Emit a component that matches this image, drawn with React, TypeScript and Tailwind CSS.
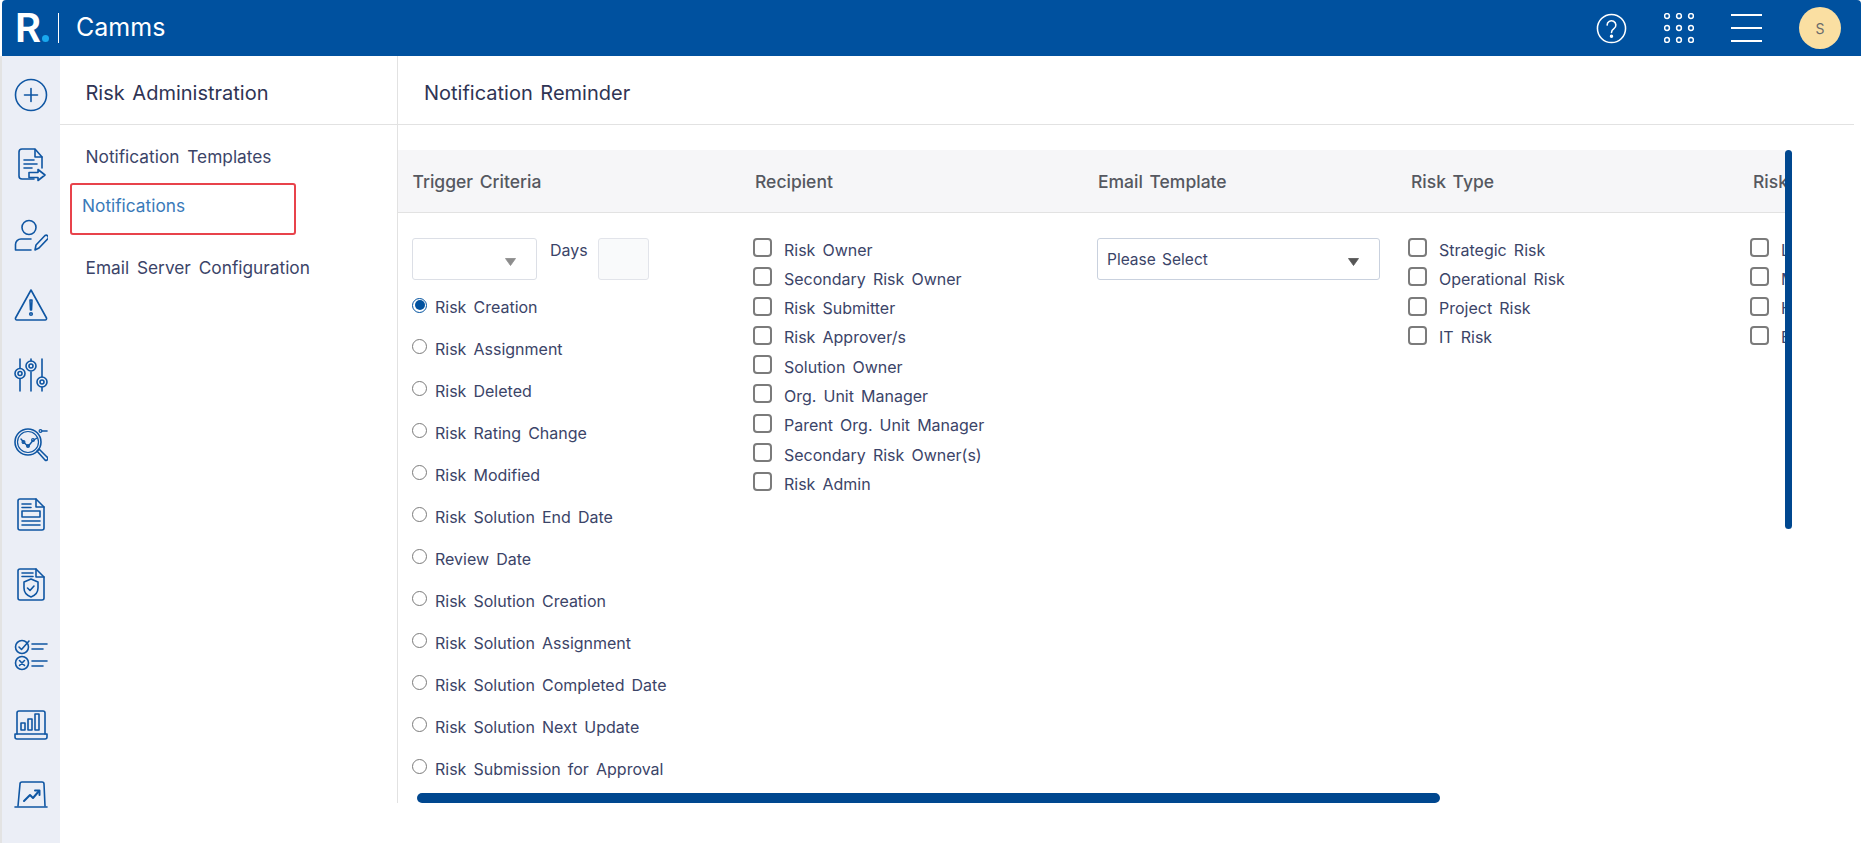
import React from "react";

const triggers = [
  "Risk Creation",
  "Risk Assignment",
  "Risk Deleted",
  "Risk Rating Change",
  "Risk Modified",
  "Risk Solution End Date",
  "Review Date",
  "Risk Solution Creation",
  "Risk Solution Assignment",
  "Risk Solution Completed Date",
  "Risk Solution Next Update",
  "Risk Submission for Approval",
];

const recipients = [
  "Risk Owner",
  "Secondary Risk Owner",
  "Risk Submitter",
  "Risk Approver/s",
  "Solution Owner",
  "Org. Unit Manager",
  "Parent Org. Unit Manager",
  "Secondary Risk Owner(s)",
  "Risk Admin",
];

const riskTypes = ["Strategic Risk", "Operational Risk", "Project Risk", "IT Risk"];
const riskLevels = ["Low", "Medium", "High", "Extreme"];

function SideIcon({ children }: { children: React.ReactNode }) {
  return (
    <svg
      viewBox="0 0 34 34"
      className="h-[34px] w-[34px] shrink-0"
      fill="none"
      stroke="#0f56a3"
      strokeWidth="1.6"
      strokeLinecap="round"
      strokeLinejoin="round"
    >
      {children}
    </svg>
  );
}

function Sidebar() {
  return (
    <div className="flex w-[58px] shrink-0 flex-col items-center gap-[36px] overflow-hidden bg-[#ebeef6] pt-[22px]">
      <SideIcon>
        <circle cx="17" cy="17" r="15.500" />
        <path d="M17 10.500v13M10.500 17h13" />
      </SideIcon>
      <SideIcon>
        <path d="M20 31H8a3 3 0 0 1-3-3V4a3 3 0 0 1 3-3h13l7 8v11" />
        <path d="M21 1.500V9h7" />
        <path d="M10 12h10M10 16h13M10 20h8" />
        <path d="M15 24.500h9v-3l7 5.500-7 5.500v-3h-9z" />
      </SideIcon>
      <SideIcon>
        <circle cx="15" cy="9.500" r="7" />
        <path d="M17 21H7a5.500 5.500 0 0 0-5.500 5.500V32H17" />
        <path d="M21 32l1-5 9-9.500a2.200 2.200 0 0 1 3 3l-9 9.500z" />
      </SideIcon>
      <SideIcon>
        <path d="M17 2L1.500 30a1.500 1.500 0 0 0 1.300 2h28.400a1.500 1.500 0 0 0 1.300-2z" />
        <path d="M16 12h2l-.5 10h-1z" />
        <circle cx="17" cy="26" r="1.300" />
      </SideIcon>
      <SideIcon>
        <path d="M6 1v9M6 21v12M17 1v2M17 14v19M28 1v18M28 29v4" />
        <circle cx="6" cy="15.500" r="5" />
        <circle cx="6" cy="15.500" r="2" />
        <circle cx="17" cy="8" r="5" />
        <circle cx="17" cy="8" r="2" />
        <circle cx="28" cy="24" r="5" />
        <circle cx="28" cy="24" r="2" />
      </SideIcon>
      <SideIcon>
        <circle cx="14" cy="14" r="13" />
        <circle cx="14" cy="14" r="10.500" strokeWidth="1.200" />
        <path d="M7 11l3 3.500 4 4 5-6 4-2.500" strokeWidth="1.400" />
        <circle cx="9.500" cy="14" r="1.400" strokeWidth="1.200" />
        <circle cx="14" cy="18" r="1.400" strokeWidth="1.200" />
        <circle cx="19" cy="12" r="1.400" strokeWidth="1.200" />
        <path d="M23 23l2-2 8 8a1.400 1.400 0 0 1-2 3z" />
        <path d="M28 3h5" />
        <circle cx="26.500" cy="3" r="1.400" strokeWidth="1.200" />
      </SideIcon>
      <SideIcon>
        <path d="M6 1h16l8 8v21a2 2 0 0 1-2 2H6a2 2 0 0 1-2-2V3a2 2 0 0 1 2-2z" />
        <path d="M22 1v8h8" />
        <path d="M8 6h9M8 9.500h9" />
        <rect x="8" y="13" width="18" height="6" />
        <path d="M8 23h18M8 27h18" />
      </SideIcon>
      <SideIcon>
        <path d="M6 1h16l8 8v21a2 2 0 0 1-2 2H6a2 2 0 0 1-2-2V3a2 2 0 0 1 2-2z" />
        <path d="M22 1v8h8" />
        <path d="M8 5h11M8 8.500h11" />
        <path d="M17 11l7 3v6c0 4.500-3 7.500-7 9-4-1.500-7-4.500-7-9v-6z" />
        <path d="M13.500 20l2.500 2.500 4-4.500" />
      </SideIcon>
      <SideIcon>
        <circle cx="8" cy="9" r="6.500" />
        <path d="M5 9l2.500 2.500L15 3" />
        <circle cx="8" cy="25" r="6.500" />
        <path d="M5.500 22.500l5 5M10.500 22.500l-5 5" />
        <path d="M18 6h15M18 11h11M18 23h15M18 28h11" />
      </SideIcon>
      <SideIcon>
        <path d="M3 26V5a2 2 0 0 1 2-2h24a2 2 0 0 1 2 2v21" />
        <path d="M1 26h32v3a2 2 0 0 1-2 2H3a2 2 0 0 1-2-2z" />
        <rect x="7" y="15" width="4" height="7" />
        <rect x="14" y="11" width="4" height="11" />
        <rect x="21" y="6" width="4" height="16" />
      </SideIcon>
      <SideIcon>
        <path d="M4 28L6 6a2 2 0 0 1 2-2h20a2 2 0 0 1 2 2l1 22" />
        <path d="M1 29h32" />
        <path d="M10 23l6-6 3 3 6-7" strokeWidth="2" />
        <path d="M21 12.500h4.500V17" strokeWidth="2" />
      </SideIcon>
    </div>
  );
}

function Checks({ items }: { items: string[] }) {
  return (
    <div className="flex flex-col gap-[10.3px] pt-[25px]">
      {items.map((label) => (
        <label key={label} className="flex h-[19px] items-center gap-[12px] whitespace-nowrap">
          <span className="h-[19px] w-[19px] shrink-0 rounded-[4px] border-2 border-[#7b7b7b] bg-white" />
          <span className="relative top-[2px]">{label}</span>
        </label>
      ))}
    </div>
  );
}

function Arrow({ color }: { color: string }) {
  return (
    <svg viewBox="0 0 11 8" className="mt-[5px] h-[8px] w-[11px]" fill={color}>
      <path d="M0.500 0.500h10L5.500 7.500z" stroke={color} strokeWidth="0.800" strokeLinejoin="round" />
    </svg>
  );
}

export default function App() {
  return (
    <div className="flex h-[843px] w-[1861px] flex-col overflow-hidden bg-white pl-[2px] [font-family:Inter,sans-serif] text-[16px] text-[#3b4468] [word-spacing:2.6px]">
      <header className="flex h-[56px] shrink-0 items-center rounded-tl-[4px] rounded-tr-[4px] bg-[#00519f] pl-[13px] text-white">
        <div className="flex items-baseline text-[41px] font-semibold leading-none [font-family:Roboto,sans-serif]">
          R<span className="ml-[1px] h-[7px] w-[7px] rounded-full bg-[#19a8ee]" />
        </div>
        <div className="ml-[9px] h-[30px] w-px bg-white" />
        <div className="ml-[17px] text-[25px] [word-spacing:0]">Camms</div>
        <div className="ml-auto flex items-center pr-[20px]">
          <svg viewBox="0 0 32 32" className="mr-[37px] h-[31px] w-[31px]" fill="none" stroke="white" strokeWidth="1.600">
            <circle cx="16" cy="16" r="14.500" />
            <path d="M11.500 12.500a4.500 4.500 0 1 1 7 3.700c-1.600 1.100-2.500 2-2.500 3.800" strokeLinecap="round" />
            <circle cx="16" cy="24" r="1" fill="white" />
          </svg>
          <svg viewBox="0 0 30 30" className="mr-[37px] h-[30px] w-[30px]" fill="none" stroke="white" strokeWidth="1.500">
            {[3, 15, 27].map((y) =>
              [3, 15, 27].map((x) => <circle key={`${x}-${y}`} cx={x} cy={y} r="2.400" />)
            )}
          </svg>
          <div className="mr-[37px] flex h-[28px] w-[31px] flex-col justify-between">
            <span className="h-[2px] bg-white" />
            <span className="h-[2px] bg-white" />
            <span className="h-[2px] bg-white" />
          </div>
          <div className="flex h-[42px] w-[42px] items-center justify-center rounded-full bg-[#fadfa2] text-[14px] text-[#6b6b6b]">
            S
          </div>
        </div>
      </header>

      <div className="flex min-h-0 flex-1 border-l-2 border-[#e3e3e3] [margin-left:-2px]">
        <Sidebar />
        <div className="flex min-w-0 flex-1 flex-col">
          <div className="mr-[7px] flex h-[69px] shrink-0 items-center border-b border-[#e2e2e2] text-[20px] text-[#2f3454] [word-spacing:2px]">
            <div className="flex h-full w-[338px] shrink-0 items-center border-r border-[#e2e2e2] pl-[25.500px] pt-[6px]">
              Risk Administration
            </div>
            <div className="pl-[26px] pt-[6px]">Notification Reminder</div>
          </div>

          <div className="flex h-[678px] shrink-0">
            <nav className="w-[338px] shrink-0 border-r border-[#e2e2e2] pl-[10px] pt-[19px] text-[17.3px] [word-spacing:3px]">
              <div className="h-[26px] pl-[15.500px] leading-[26px]">Notification Templates</div>
              <div className="mt-[13px] h-[52px] w-[226px] rounded-[3px] border-2 border-[#e8434b] pl-[10px] pt-[8px] leading-[26px] text-[#3a7ab9]">
                Notifications
              </div>
              <div className="mt-[20px] h-[26px] pl-[15.500px] leading-[26px]">Email Server Configuration</div>
            </nav>

            <div className="relative min-w-0 flex-1">
              <div className="mt-[25px] w-[1388px] overflow-hidden">
                <div className="flex h-[63px] w-[1500px] items-center border-b border-[#e2e2e2] bg-[#f6f6f8] pt-[3px] text-[17.5px] font-medium text-[#555860] [word-spacing:2px]">
                  <div className="w-[357px] pl-[14.500px]">Trigger Criteria</div>
                  <div className="w-[343px]">Recipient</div>
                  <div className="w-[313px]">Email Template</div>
                  <div className="w-[342px]">Risk Type</div>
                  <div>Risk Level</div>
                </div>

                <div className="flex w-[1500px]">
                  <div className="w-[355px] shrink-0 pl-[14px] pt-[25px]">
                    <div className="flex items-start">
                      <div className="flex h-[42px] w-[125px] items-center justify-end rounded-[3px] border border-[#dcdfe6] pr-[20px]">
                        <Arrow color="#8c8c8c" />
                      </div>
                      <div className="ml-[13px] text-[16px]">Days</div>
                      <div className="ml-[10px] h-[42px] w-[51px] rounded-[3px] border border-[#e2e4ea] bg-[#f9fafb]" />
                    </div>
                    <div className="mt-[5.500px] flex flex-col">
                      {triggers.map((label, i) => (
                        <div key={label} className="flex h-[42px] items-center gap-[8px] whitespace-nowrap">
                          {i === 0 ? (
                            <span className="relative -top-[1.500px] flex h-[15px] w-[15px] shrink-0 items-center justify-center rounded-full border border-[#00519f]">
                              <span className="h-[10px] w-[10px] rounded-full bg-[#00519f]" />
                            </span>
                          ) : (
                            <span className="relative -top-[2.500px] h-[15px] w-[15px] shrink-0 rounded-full border border-[#7b7b7b]" />
                          )}
                          <span>{label}</span>
                        </div>
                      ))}
                    </div>
                  </div>
                  <div className="w-[344px] shrink-0">
                    <Checks items={recipients} />
                  </div>
                  <div className="w-[311px] shrink-0 pt-[25px]">
                    <div className="flex h-[42px] w-[283px] items-center justify-between rounded-[3px] border border-[#c9d1de] pl-[9px] pr-[20px] text-[15.500px] [word-spacing:2px]">
                      <span className="pt-[2px]">Please Select</span>
                      <Arrow color="#555555" />
                    </div>
                  </div>
                  <div className="w-[342px] shrink-0">
                    <Checks items={riskTypes} />
                  </div>
                  <div className="shrink-0">
                    <Checks items={riskLevels} />
                  </div>
                </div>
              </div>

              <div className="absolute left-[1387px] top-[25px] h-[379px] w-[7px] rounded-full bg-[#00478f]" />
              <div className="absolute left-[19px] bottom-0 h-[10px] w-[1023px] rounded-full bg-[#00478f]" />
            </div>
          </div>
        </div>
      </div>
    </div>
  );
}
